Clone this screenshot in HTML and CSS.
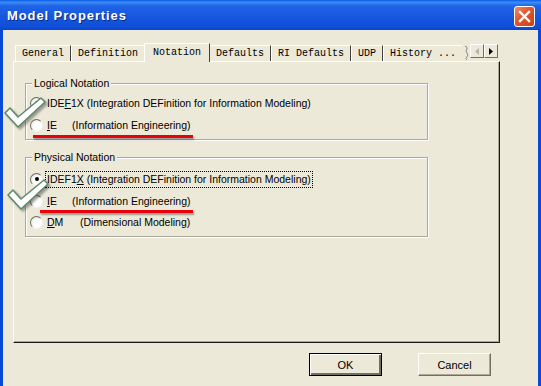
FILE: index.html
```html
<!DOCTYPE html>
<html lang="en">
<head>
  <meta charset="UTF-8">
  <meta name="viewport" content="width=device-width, initial-scale=1.0">
  <title>Model Properties</title>
  <link rel="stylesheet" href="styles.css">
</head>
<body>
  <div class="window">
    <div class="titlebar">
      <span class="title">Model Properties</span>
      <span class="close">
        <svg width="13" height="13" viewBox="0 0 13 13">
          <path d="M2 2 L11 11 M11 2 L2 11" stroke="#fff" stroke-width="2.4" stroke-linecap="square"/>
        </svg>
      </span>
    </div>

    <div class="client">
      <div class="tabs">
        <div class="tab first">General</div>
        <div class="tab">Definition</div>
        <div class="tab active">Notation</div>
        <div class="tab">Defaults</div>
        <div class="tab">RI Defaults</div>
        <div class="tab">UDP</div>
        <div class="tab cut">History ...</div>
        <svg class="tear" width="6" height="16" viewBox="0 0 6 16">
          <path d="M1 1 Q4 2 3 4 Q1 6 3 8 Q5 10 3 12 Q1 14 3 15" fill="none" stroke="#8a8778" stroke-width="1"/>
        </svg>
        <div class="spin">
          <span class="spin-btn"><svg width="4" height="7" viewBox="0 0 4 7"><path d="M4 0 L0 3.5 L4 7 Z" fill="#b5b2a6"/></svg></span>
          <span class="spin-btn"><svg width="4" height="7" viewBox="0 0 4 7"><path d="M0 0 L4 3.5 L0 7 Z" fill="#000"/></svg></span>
        </div>
      </div>

      <div class="panel">
        <div class="group logical">
          <span class="group-title">Logical Notation</span>
          <div class="option">
            <span class="radio checked"></span>
            <span class="text">IDE<u>F</u>1X (Integration DEFinition for Information Modeling)</span>
          </div>
          <div class="option">
            <span class="radio"></span>
            <span class="text"><span class="code"><u>I</u>E</span>(Information Engineering)</span>
          </div>
        </div>

        <div class="group physical">
          <span class="group-title">Physical Notation</span>
          <div class="option">
            <span class="radio checked"></span>
            <span class="text focus">IDEF1<u>X</u> (Integration DEFinition for Information Modeling)</span>
          </div>
          <div class="option">
            <span class="radio"></span>
            <span class="text"><span class="code"><u>I</u>E</span>(Information Engineering)</span>
          </div>
          <div class="option">
            <span class="radio"></span>
            <span class="text"><span class="code wide"><u>D</u>M</span>(Dimensional Modeling)</span>
          </div>
        </div>
      </div>

      <div class="actions">
        <button class="btn default">OK</button>
        <button class="btn">Cancel</button>
      </div>
    </div>

    <!-- annotations drawn over the dialog -->
    <span class="mark-line first-line"></span>
    <span class="mark-line second-line"></span>
    <svg class="check first-check" width="44" height="34" viewBox="0 0 44 34">
      <path d="M2 17 L7 12 L15 21 L38 2 L42 6 L15 31 Z" fill="#fff" stroke="#5f8a6c" stroke-width="1.6" stroke-linejoin="round"/>
    </svg>
    <svg class="check second-check" width="44" height="34" viewBox="0 0 44 34">
      <path d="M2 17 L7 12 L15 21 L38 2 L42 6 L15 31 Z" fill="#fff" stroke="#5f8a6c" stroke-width="1.6" stroke-linejoin="round"/>
    </svg>
  </div>
</body>
</html>
```

FILE: styles.css
```css
body {
  margin: 0;
  font-family: "Liberation Sans", Arial, sans-serif;
  font-size: 10.5px;
  color: #000;
}

.window {
  position: relative;
  width: 541px;
  height: 386px;
  display: flex;
  flex-direction: column;
  background: #0a48d8;
  overflow: hidden;
}

.titlebar {
  height: 30px;
  flex: none;
  display: flex;
  align-items: center;
  justify-content: space-between;
  padding: 0 6px 0 7px;
  background: linear-gradient(#0a5ee8 0%, #3d8bf7 8%, #1e63e6 20%, #1656de 60%, #0f4fd8 90%, #0a44c8 100%);
}

.title {
  color: #fff;
  font-weight: bold;
  font-size: 13px;
  letter-spacing: 0.9px;
  text-shadow: 1px 1px 0 #0a2a80;
  padding-top: 1px;
}

.close {
  width: 19px;
  height: 19px;
  margin-top: 2px;
  display: flex;
  align-items: center;
  justify-content: center;
  border: 1px solid #fff;
  border-radius: 3px;
  background: linear-gradient(135deg, #f08a6a 0%, #e0552f 45%, #c8401c 100%);
}

.client {
  flex: 1;
  margin: 0 3px;
  background: #ece9d8;
  padding: 11px 0 0 10px;
}

/* tab strip */
.tabs {
  display: flex;
  align-items: flex-end;
  width: 486px;
  height: 20px;
  font-family: "Liberation Mono", "Courier New", monospace;
  font-size: 10px;
}

.tab {
  height: 16px;
  line-height: 16px;
  padding: 0 6px;
  border-top: 1px solid #fff;
  border-left: 1px solid #fff;
  border-right: 1px solid #404040;
  box-sizing: border-box;
  white-space: nowrap;
}

.tab.first {
  margin-left: 2px;
}

.tab.active {
  height: 19px;
  line-height: 18px;
  padding: 0 8px;
  margin: 0 -1px -1px -1px;
  position: relative;
  z-index: 1;
  background: #ece9d8;
  border-right: 1px solid #404040;
}

.tab.cut {
  border-right: none;
}

.tear {
  align-self: flex-end;
  margin-left: 2px;
}

.spin {
  display: flex;
  margin-left: auto;
  margin-right: 1px;
  align-self: flex-start;
  margin-top: 3px;
}

.spin-btn {
  width: 14px;
  height: 14px;
  display: flex;
  align-items: center;
  justify-content: center;
  background: #ece9d8;
  border-top: 1px solid #fff;
  border-left: 1px solid #fff;
  border-right: 1px solid #716f64;
  border-bottom: 1px solid #716f64;
  box-sizing: border-box;
}

/* tab page */
.panel {
  width: 487px;
  height: 282px;
  box-sizing: border-box;
  border-top: 1px solid #fff;
  border-left: 1px solid #fff;
  border-right: 1px solid #1a1a1a;
  border-bottom: 1px solid #1a1a1a;
  box-shadow: inset -1px -1px 0 #aca899;
  padding: 21px 0 0 11px;
}

.group {
  position: relative;
  width: 403px;
  box-sizing: border-box;
  border: 1px solid #aca899;
  box-shadow: inset 1px 1px 0 #fff, 1px 1px 0 #fff;
  padding: 8px 0 3px 4px;
}

.group.physical {
  margin-top: 17px;
  padding-top: 10px;
}

.group-title {
  position: absolute;
  top: -7px;
  left: 6px;
  padding: 0 2px;
  line-height: 13px;
  background: #ece9d8;
}

.option {
  height: 22px;
  display: flex;
  align-items: center;
}

.group.physical .option:last-child {
  height: 21px;
}

.radio {
  width: 13px;
  height: 13px;
  box-sizing: border-box;
  border-radius: 50%;
  border: 1px solid;
  border-color: #6d6b60 #f4f3ee #f4f3ee #6d6b60;
  background: radial-gradient(circle at 60% 60%, #fff 40%, #dcd9cc 100%);
  display: flex;
  align-items: center;
  justify-content: center;
  margin-right: 4px;
}

.radio.checked::after {
  content: "";
  width: 4px;
  height: 4px;
  border-radius: 50%;
  background: #000;
}

.text {
  line-height: 13px;
  white-space: nowrap;
}

.text.focus {
  outline: 1px dotted #000;
  outline-offset: 1px;
}

.code {
  display: inline-block;
  width: 25px;
}

.code.wide {
  width: 33px;
}

/* buttons */
.actions {
  display: flex;
  justify-content: flex-end;
  gap: 36px;
  width: 478px;
  margin-top: 10px;
}

.btn {
  width: 73px;
  height: 23px;
  font-family: "Liberation Sans", Arial, sans-serif;
  font-size: 11px;
  color: #000;
  background: #ece9d8;
  border: 1px solid;
  border-color: #fff #716f64 #716f64 #fff;
  box-shadow: inset -1px -1px 0 #aca899;
  padding: 0;
}

.btn.default {
  border: 1px solid #000;
  box-shadow: inset 1px 1px 0 #fff, inset -2px -2px 0 #716f64;
}

/* red underlines and check marks */
.mark-line {
  position: absolute;
  height: 3px;
  background: #e8000a;
  box-shadow: 1px 2px 2px rgba(0, 0, 0, 0.35);
}

.first-line {
  left: 33px;
  top: 135px;
  width: 160px;
}

.second-line {
  left: 40px;
  top: 210px;
  width: 153px;
}

.check {
  position: absolute;
  filter: drop-shadow(2px 2px 1px rgba(0, 0, 0, 0.35));
}

.first-check {
  left: 3px;
  top: 96px;
}

.second-check {
  left: 6px;
  top: 178px;
}
```
